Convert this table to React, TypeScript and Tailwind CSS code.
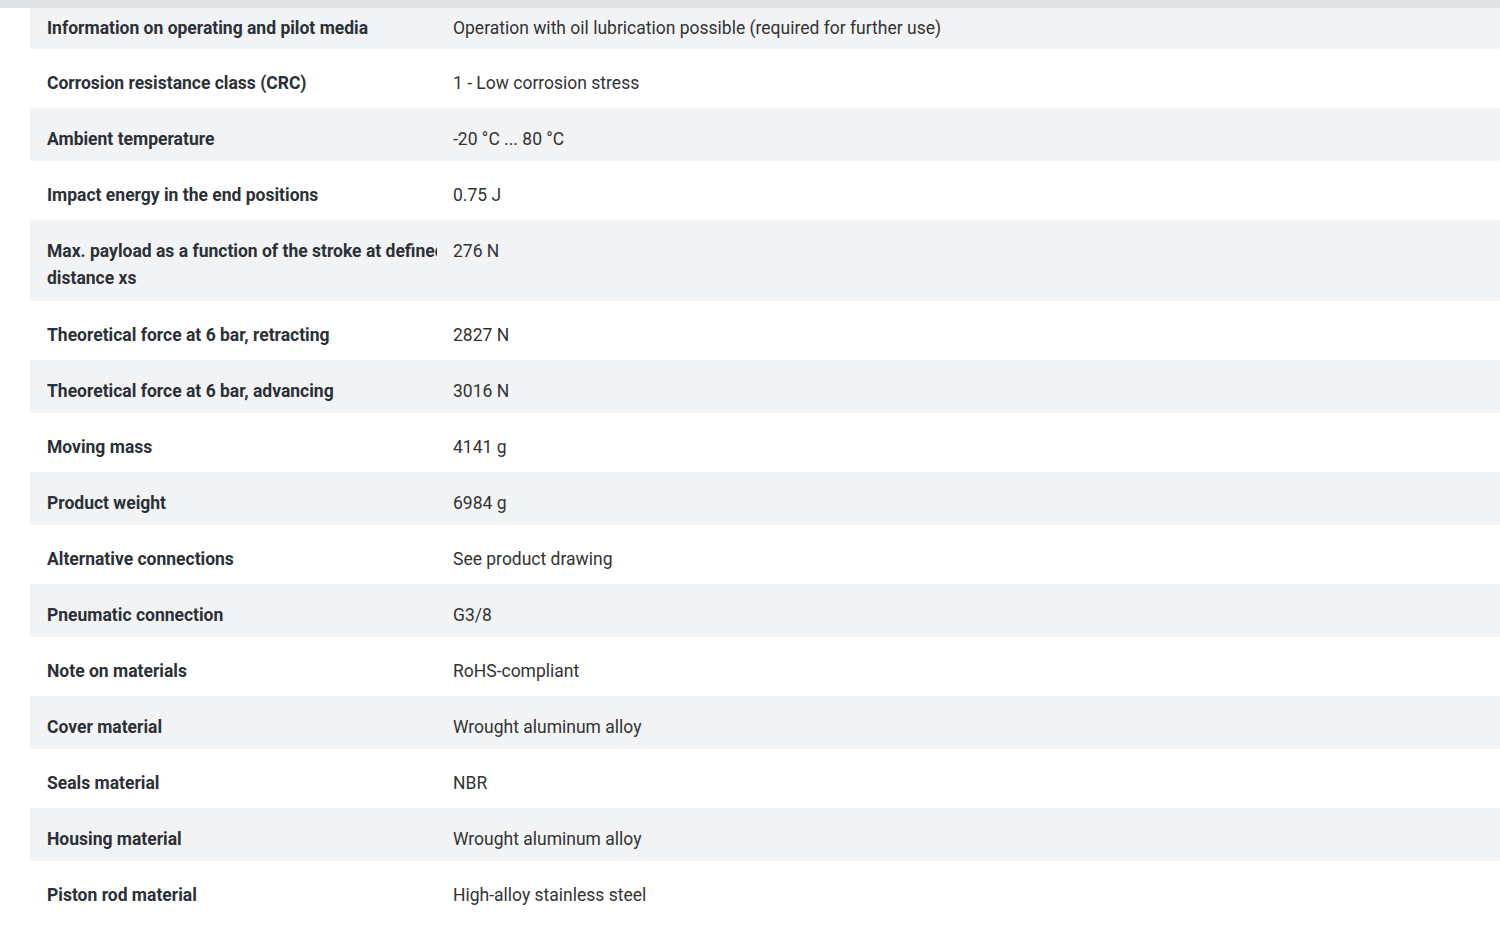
import React from "react";

const rows: [string, string][] = [
  ["Corrosion resistance class (CRC)", "1 - Low corrosion stress"],
  ["Ambient temperature", "-20 °C ... 80 °C"],
  ["Impact energy in the end positions", "0.75 J"],
  ["Max. payload as a function of the stroke at defined distance xs", "276 N"],
  ["Theoretical force at 6 bar, retracting", "2827 N"],
  ["Theoretical force at 6 bar, advancing", "3016 N"],
  ["Moving mass", "4141 g"],
  ["Product weight", "6984 g"],
  ["Alternative connections", "See product drawing"],
  ["Pneumatic connection", "G3/8"],
  ["Note on materials", "RoHS-compliant"],
  ["Cover material", "Wrought aluminum alloy"],
  ["Seals material", "NBR"],
  ["Housing material", "Wrought aluminum alloy"],
  ["Piston rod material", "High-alloy stainless steel"],
];

function Row({ label, value, gray, first }: { label: string; value: string; gray: boolean; first?: boolean }) {
  const long = label.startsWith("Max.");
  const h = first ? "h-[41px] pt-[7px]" : gray ? (long ? "h-[81px] pt-[18px]" : "h-[53px] pt-[18px]") : "h-[59px] pt-[21px]";
  return (
    <div className={`flex items-start ${h} ${gray ? "bg-[#f2f3f5]" : "bg-white"}`}>
      <div className="w-[423px] shrink-0 pl-[17px] pr-[16px]">
        <div className="w-[390px] overflow-hidden">
          <div className="w-[420px] text-[17.5px] leading-[27px] font-bold text-[#2b3036]">{label}</div>
        </div>
      </div>
      <div className="text-[17.5px] leading-[27px] text-[#333]">{value}</div>
    </div>
  );
}

export default function App() {
  return (
    <div className="w-[1500px] h-[938px] overflow-hidden bg-white" style={{ fontFamily: "Roboto, 'Liberation Sans', sans-serif" }}>
      <div className="h-[8px] bg-[#dfe1e4]" />
      <div className="ml-[30px]">
        <Row first gray label="Information on operating and pilot media" value="Operation with oil lubrication possible (required for further use)" />
        {rows.map((r, i) => (
          <Row key={i} label={r[0]} value={r[1]} gray={i % 2 === 1} />
        ))}
      </div>
    </div>
  );
}
